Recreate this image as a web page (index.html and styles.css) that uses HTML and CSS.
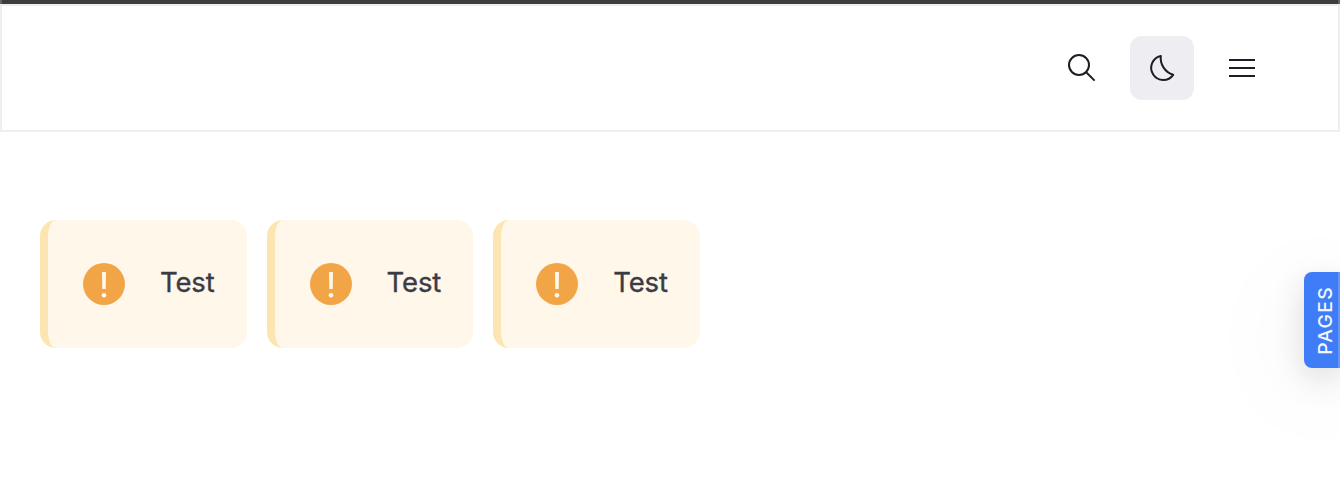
FILE: index.html
```
<!DOCTYPE html>
<html lang="en">
<head>
<meta charset="utf-8">
<title>Test</title>
<link rel="stylesheet" href="styles.css">
</head>
<body>
<header class="header">
  <div class="topbar"></div>
  <nav class="nav">
    <button class="tool" aria-label="Search">
      <svg width="64" height="64" viewBox="0 0 64 64"><circle cx="29" cy="29" r="10"/><path d="M36.2 36.2 44.6 44.6"/></svg>
    </button>
    <button class="tool tool-active" aria-label="Dark mode">
      <svg width="64" height="64" viewBox="0 0 64 64"><path d="M30.8 20A12.1 12.1 0 1 0 43.2 38.8A17.6 17.6 0 0 1 30.8 20Z"/></svg>
    </button>
    <button class="tool" aria-label="Menu">
      <svg width="64" height="64" viewBox="0 0 64 64"><path d="M19 24H45M19 32H45M19 40H45"/></svg>
    </button>
  </nav>
</header>
<main class="cards">
  <div class="card">
    <svg class="alert" viewBox="0 0 42 42"><circle cx="21" cy="21" r="21"/><path d="M19 9h4l-.3 17h-3.4z"/><circle class="dot" cx="21" cy="32.3" r="2.3"/></svg>
    <span>Test</span>
  </div>
  <div class="card">
    <svg class="alert" viewBox="0 0 42 42"><circle cx="21" cy="21" r="21"/><path d="M19 9h4l-.3 17h-3.4z"/><circle class="dot" cx="21" cy="32.3" r="2.3"/></svg>
    <span>Test</span>
  </div>
  <div class="card">
    <svg class="alert" viewBox="0 0 42 42"><circle cx="21" cy="21" r="21"/><path d="M19 9h4l-.3 17h-3.4z"/><circle class="dot" cx="21" cy="32.3" r="2.3"/></svg>
    <span>Test</span>
  </div>
</main>
<aside class="pages"><span>PAGES</span></aside>
</body>
</html>
```
FILE: styles.css
```
* { box-sizing: border-box; }
body {
  margin: 0;
  height: 486px;
  overflow: hidden;
  background: #fff;
  color: #3b3b46;
  font-family: Inter, sans-serif;
}
.header {
  height: 132px;
  border: 2px solid #ededf2;
  border-top: 0;
}
.topbar {
  height: 4px;
  margin: 0 -2px;
  background: #3d3d3d;
  border: 0 solid #636365;
  border-width: 0 2px;
}
.nav {
  display: flex;
  justify-content: flex-end;
  gap: 16px;
  padding: 30px 64px 0 0;
  border-top: 2px solid #ededf2;
}
.tool {
  width: 64px;
  height: 64px;
  padding: 0;
  border: 0;
  border-radius: 12px;
  background: transparent;
}
.tool-active { background: #ededf2; }
.tool svg {
  display: block;
  fill: none;
  stroke: #1d1d25;
  stroke-width: 2;
  stroke-linejoin: round;
}
.cards {
  display: flex;
  gap: 20px;
  padding: 88px 40px 0;
}
.card {
  display: flex;
  align-items: center;
  width: 206.6px;
  height: 128px;
  padding-left: 35px;
  border-left: 8px solid #fce5b1;
  border-radius: 16px;
  background: #fff7e9;
  font-size: 27.5px;
  letter-spacing: -.15px;
  line-height: 36px;
  -webkit-text-stroke: .35px #3b3b46;
}
.card span { padding: 0 0 4px 35px; }
.alert {
  flex: none;
  width: 42px;
  height: 42px;
  fill: #f2a547;
}
.alert path, .alert .dot { fill: #fff7e9; }
.pages {
  position: absolute;
  top: 272px;
  right: 0;
  display: flex;
  align-items: center;
  justify-content: center;
  width: 36px;
  height: 96px;
  padding-left: 8px;
  border-right: 2px solid #6495f8;
  border-radius: 8px 0 0 8px;
  background: #3f7cf8;
  box-shadow: 0 10px 32px rgba(0, 0, 0, .13), 0 18px 110px rgba(0, 0, 0, .09);
  color: #f3f6ff;
}
.pages span {
  writing-mode: vertical-rl;
  transform: rotate(180deg);
  font-size: 19.3px;
  font-weight: 500;
  line-height: 24px;
  letter-spacing: 1.3px;
}
```
